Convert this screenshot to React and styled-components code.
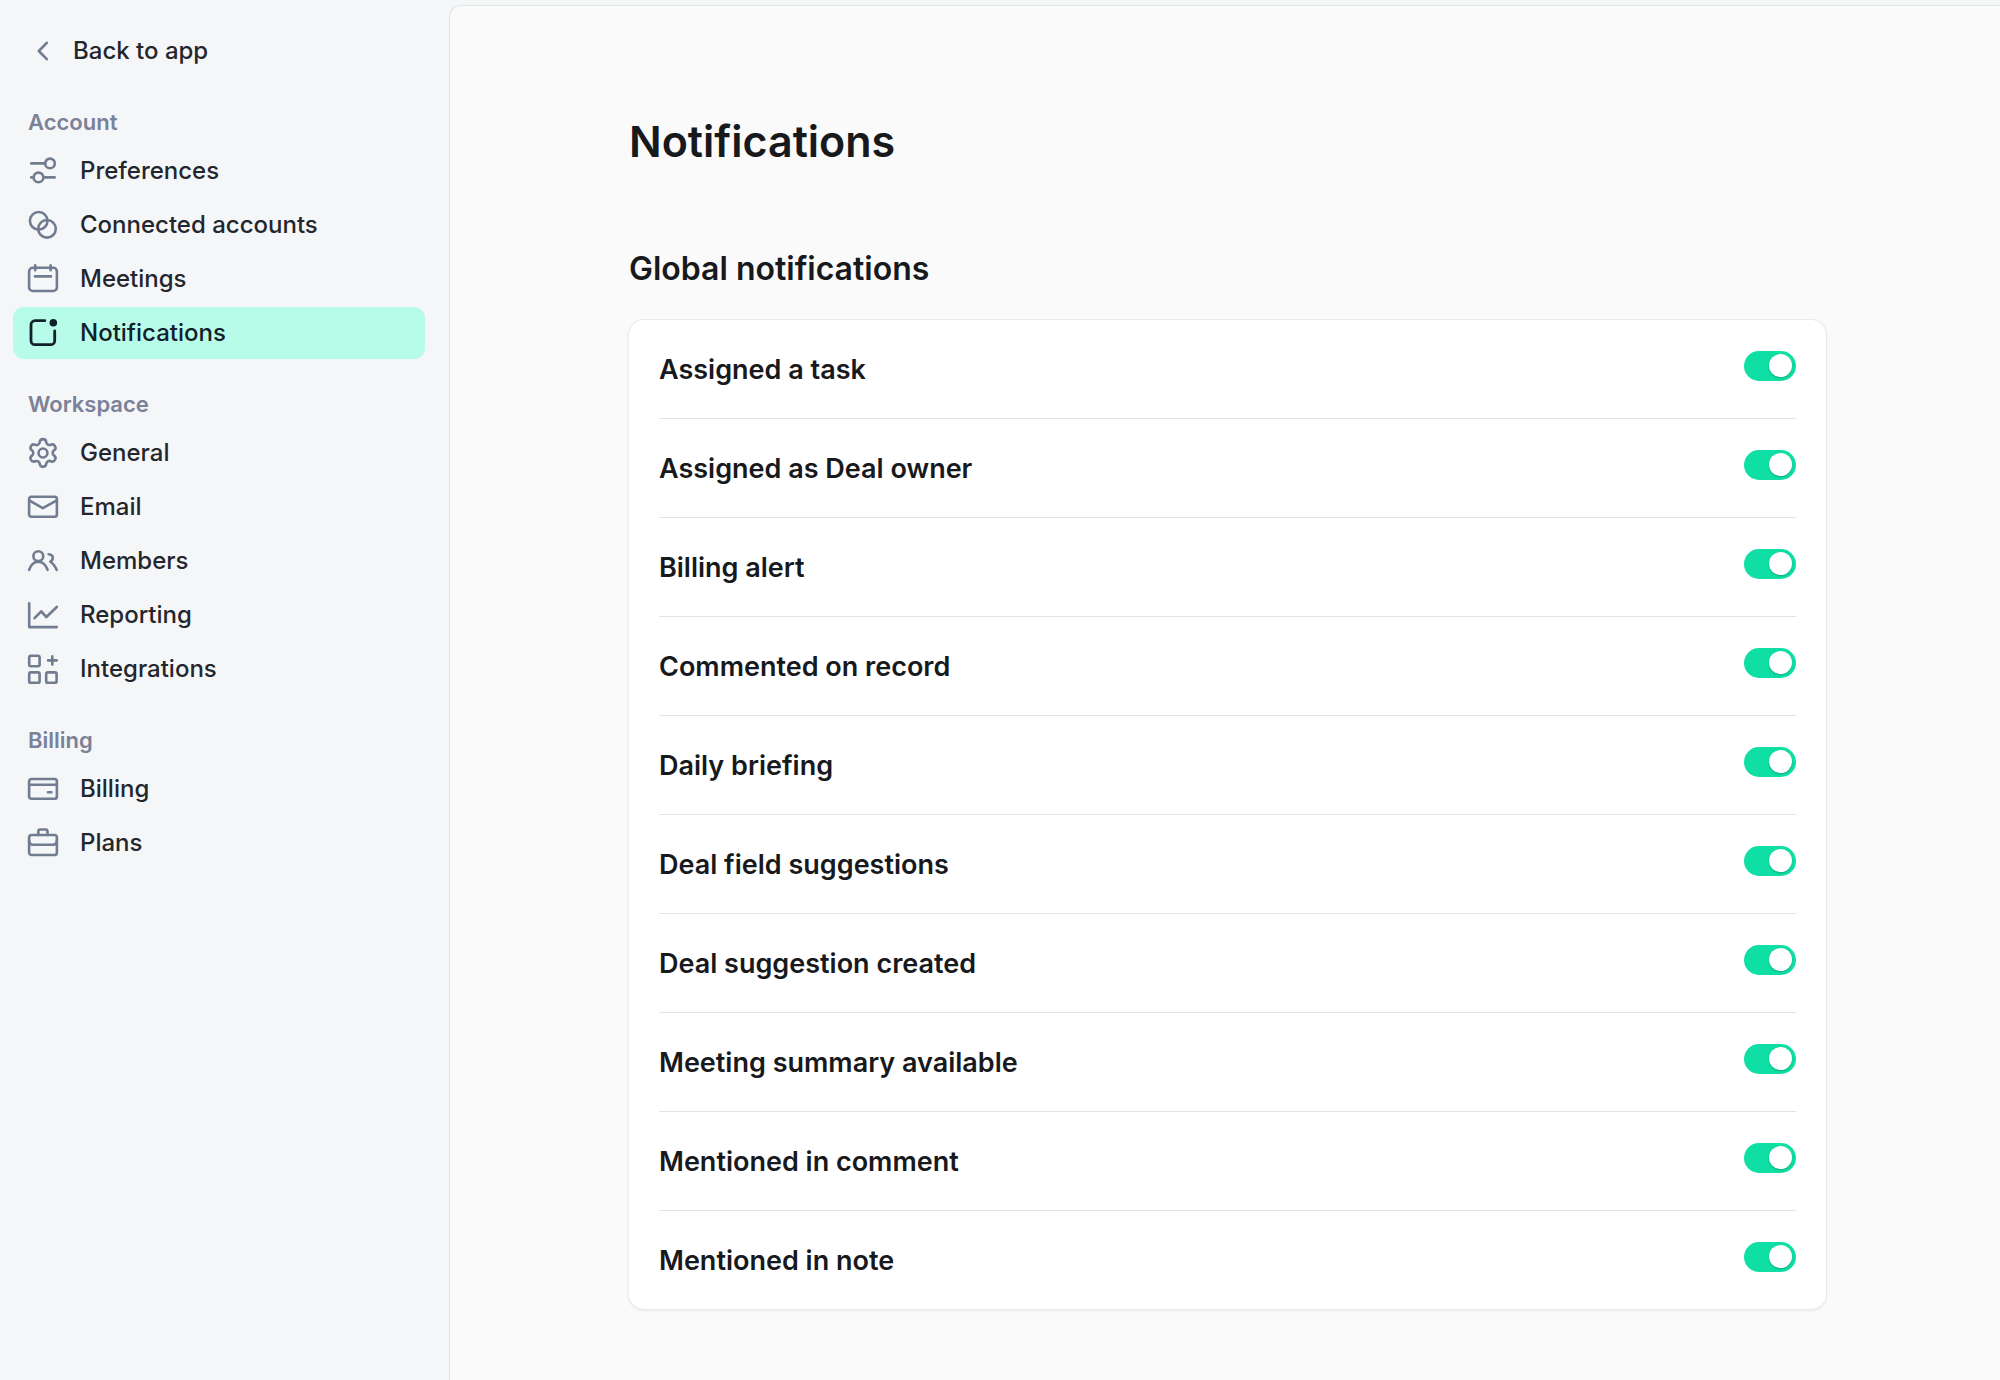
import React, { useState } from 'react'
import styled, { createGlobalStyle } from 'styled-components'

const GlobalStyle = createGlobalStyle`
  * {
    box-sizing: border-box;
  }
  body {
    margin: 0;
    background: #f4f6f8;
    color: #17191c;
    font-family: Inter, 'Liberation Sans', sans-serif;
    -webkit-font-smoothing: antialiased;
  }
`

const Page = styled.div`
  display: flex;
  min-height: 100vh;
`

const Sidebar = styled.aside`
  flex: none;
  width: 449px;
  padding: 25px 24px 25px 13px;
`

const BackLink = styled.a`
  display: flex;
  align-items: center;
  gap: 15px;
  height: 52px;
  padding: 0 15px;
  color: #24262d;
  font-size: 24px;
  font-weight: 500;
  line-height: 28px;
  text-decoration: none;
`

const NavGroup = styled.nav`
  margin-top: 31px;
`

const NavHeading = styled.h2`
  margin: 0 0 9px;
  padding: 0 15px;
  color: #7b8197;
  font-size: 22px;
  font-weight: 600;
  line-height: 28px;
`

const NavList = styled.ul`
  display: flex;
  flex-direction: column;
  gap: 2px;
  margin: 0;
  padding: 0;
  list-style: none;
`

const NavLink = styled.a`
  display: flex;
  align-items: center;
  gap: 22px;
  height: 52px;
  padding: 0 15px;
  border-radius: 11px;
  background: ${(props) => (props.$active ? '#b6fce8' : 'transparent')};
  color: ${(props) => (props.$active ? '#12202b' : '#24262d')};
  font-size: 24px;
  font-weight: 500;
  line-height: 28px;
  text-decoration: none;
  &:hover {
    background: ${(props) => (props.$active ? '#b6fce8' : '#e9edf0')};
  }
`

const Icon = styled.svg`
  flex: none;
  width: 30px;
  height: 30px;
  overflow: visible;
  fill: none;
  stroke: ${(props) => (props.$active ? '#12202b' : '#727c91')};
  stroke-width: 2.6;
  stroke-linecap: round;
  stroke-linejoin: round;
`

const Main = styled.main`
  flex: 1;
  margin-top: 5px;
  padding: 107px 174px 70px 179px;
  border: 1px solid #e0e4e5;
  border-width: 1px 0 0 1px;
  border-top-left-radius: 12px;
  background: #fafafa;
`

const Title = styled.h1`
  margin: 0 0 79px;
  font-size: 43px;
  font-weight: 600;
  line-height: 56px;
`

const SectionTitle = styled.h2`
  margin: 0 0 31px;
  font-size: 32px;
  font-weight: 600;
  line-height: 41px;
`

const Card = styled.section`
  padding: 0 30px;
  border-radius: 15px;
  background: #fff;
  box-shadow: 0 0 0 1px #e9ebeb, 0 1px 3px rgba(20, 30, 30, 0.14);
`

const SettingRow = styled.div`
  display: flex;
  align-items: flex-start;
  justify-content: space-between;
  padding: 31px 0 29px;
  border-bottom: 1px solid #e2e4e4;
  &:last-child {
    border-bottom: 0;
  }
`

const SettingLabel = styled.label`
  font-size: 27px;
  font-weight: 600;
  line-height: 38px;
`

const Switch = styled.input`
  appearance: none;
  display: flex;
  flex: none;
  width: 52px;
  height: 30px;
  margin: 0;
  padding: 3px 4px;
  border-radius: 15px;
  background: #c9ced6;
  cursor: pointer;
  &::before {
    content: '';
    width: 23px;
    height: 23px;
    border-radius: 50%;
    background: #fff;
    box-shadow: 0 1px 2px rgba(0, 60, 40, 0.3);
  }
  &:checked {
    justify-content: flex-end;
    background: #0fdfa5;
  }
`

const icons = {
  back: <path d="M18.8 6.8l-8 8.2 8 8.2" />,
  preferences: (
    <>
      <path d="M3.2 7.4h13.8M3.2 21.4h2.5M15.5 21.4h11.2" />
      <circle cx="22" cy="7.4" r="4.8" />
      <circle cx="10.5" cy="21.4" r="4.8" />
    </>
  ),
  accounts: (
    <>
      <circle cx="10.7" cy="10.8" r="8.8" />
      <circle cx="19" cy="18.8" r="8.8" />
    </>
  ),
  meetings: (
    <>
      <rect x="1.1" y="3.8" width="27.8" height="23.2" rx="3.6" />
      <path d="M7.2 1.2v5M22.6 1.2v5M7 12.4h16" />
    </>
  ),
  notifications: (
    <>
      <path
        strokeWidth="2.8"
        d="M16.8 2.7H7a4 4 0 0 0-4 4v16a4 4 0 0 0 4 4h15.7a4 4 0 0 0 4-4V13"
      />
      <circle cx="25.3" cy="4.8" r="3.8" fill="#12202b" stroke="none" />
    </>
  ),
  general: (
    <g transform="translate(-1.7 -1.7) scale(1.39)" strokeWidth="1.85">
      <path d="M9.671 4.136a2.34 2.34 0 0 1 4.659 0 2.34 2.34 0 0 0 3.319 1.915 2.34 2.34 0 0 1 2.33 4.033 2.34 2.34 0 0 0 0 3.831 2.34 2.34 0 0 1-2.33 4.033 2.34 2.34 0 0 0-3.319 1.915 2.34 2.34 0 0 1-4.659 0 2.34 2.34 0 0 0-3.32-1.915 2.34 2.34 0 0 1-2.33-4.033 2.34 2.34 0 0 0 0-3.831A2.34 2.34 0 0 1 6.35 6.051a2.34 2.34 0 0 0 3.319-1.915" />
      <circle cx="12" cy="12" r="3.2" />
    </g>
  ),
  email: (
    <>
      <rect x="1.1" y="4.8" width="27.8" height="20" rx="2.2" />
      <path d="M1.6 8.6l13.2 7.6 13.6-7.6" />
    </>
  ),
  members: (
    <>
      <circle cx="10.3" cy="10.2" r="4.9" />
      <path d="M1.1 23.8c1.8-5 5-8 9.2-8s7.4 3 9.3 8" />
      <path d="M20.6 8.2c2.7.2 4.2 1.6 4.2 3.6 0 1.8-.9 3-2.5 3.8 3 1.4 4.2 4.4 6.4 8.2" />
    </>
  ),
  reporting: <path d="M1.2 3.2v23.9h27.6M6.6 18.2l6.6-6.9 5.2 5.7L28.8 7" />,
  integrations: (
    <>
      <rect x="1.2" y="1.8" width="10.4" height="10.4" rx="1.6" />
      <rect x="1.2" y="18.4" width="10.4" height="10.4" rx="1.6" />
      <rect x="18.2" y="18.4" width="10.4" height="10.4" rx="1.6" />
      <path d="M24.3 2.2v8.4M20.1 6.4h8.6" />
    </>
  ),
  billing: (
    <>
      <rect x="1.1" y="5" width="27.8" height="19.8" rx="2.4" />
      <path d="M1.1 10.7h27.8M20 18.3h3.4" />
    </>
  ),
  plans: (
    <>
      <rect x="1.1" y="7" width="27.8" height="20" rx="2.6" />
      <path d="M10.3 7V3.4a1.9 1.9 0 0 1 1.9-1.9h5.4a1.9 1.9 0 0 1 1.9 1.9V7M1.1 12.4c0 2.8 1.6 4.3 4.2 4.3h19.4c2.6 0 4.2-1.5 4.2-4.3" />
    </>
  ),
}

const groups = [
  {
    title: 'Account',
    items: [
      { label: 'Preferences', icon: 'preferences' },
      { label: 'Connected accounts', icon: 'accounts' },
      { label: 'Meetings', icon: 'meetings' },
      { label: 'Notifications', icon: 'notifications', active: true },
    ],
  },
  {
    title: 'Workspace',
    items: [
      { label: 'General', icon: 'general' },
      { label: 'Email', icon: 'email' },
      { label: 'Members', icon: 'members' },
      { label: 'Reporting', icon: 'reporting' },
      { label: 'Integrations', icon: 'integrations' },
    ],
  },
  {
    title: 'Billing',
    items: [
      { label: 'Billing', icon: 'billing' },
      { label: 'Plans', icon: 'plans' },
    ],
  },
]

const settings = [
  'Assigned a task',
  'Assigned as Deal owner',
  'Billing alert',
  'Commented on record',
  'Daily briefing',
  'Deal field suggestions',
  'Deal suggestion created',
  'Meeting summary available',
  'Mentioned in comment',
  'Mentioned in note',
]

function NavIcon({ name, active }) {
  return (
    <Icon viewBox="0 0 30 30" $active={active} aria-hidden="true">
      {icons[name]}
    </Icon>
  )
}

function Setting({ label }) {
  const [on, setOn] = useState(true)
  const id = label.toLowerCase().replace(/ /g, '-')

  return (
    <SettingRow>
      <SettingLabel htmlFor={id}>{label}</SettingLabel>
      <Switch
        id={id}
        type="checkbox"
        role="switch"
        checked={on}
        onChange={() => setOn(!on)}
      />
    </SettingRow>
  )
}

export default function App() {
  return (
    <Page>
      <GlobalStyle />
      <Sidebar>
        <BackLink href="#app">
          <NavIcon name="back" />
          Back to app
        </BackLink>
        {groups.map((group) => (
          <NavGroup key={group.title} aria-label={group.title}>
            <NavHeading>{group.title}</NavHeading>
            <NavList>
              {group.items.map((item) => (
                <li key={item.label}>
                  <NavLink
                    href={'#' + item.icon}
                    $active={item.active}
                    aria-current={item.active ? 'page' : undefined}
                  >
                    <NavIcon name={item.icon} active={item.active} />
                    {item.label}
                  </NavLink>
                </li>
              ))}
            </NavList>
          </NavGroup>
        ))}
      </Sidebar>
      <Main>
        <Title>Notifications</Title>
        <SectionTitle>Global notifications</SectionTitle>
        <Card>
          {settings.map((label) => (
            <Setting key={label} label={label} />
          ))}
        </Card>
      </Main>
    </Page>
  )
}
